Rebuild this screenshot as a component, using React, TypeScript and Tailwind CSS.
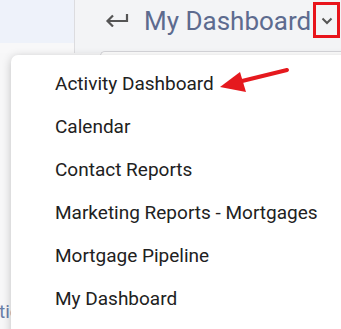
import React from "react";

const items = [
  "Activity Dashboard",
  "Calendar",
  "Contact Reports",
  "Marketing Reports - Mortgages",
  "Mortgage Pipeline",
  "My Dashboard",
];

export default function App() {
  return (
    <div
      className="relative w-[341px] h-[329px] overflow-hidden bg-[#f7f7f8]"
      style={{ fontFamily: "Roboto, 'Liberation Sans', sans-serif" }}
    >
      {/* top bar */}
      <div className="flex h-[53px]">
        <div className="w-[74px] flex flex-col">
          <div className="h-[43px] bg-[#eef2fa]" />
          <div className="flex-1 bg-[#f8f8f9]" />
        </div>
        <div className="w-px bg-[#dcdcdf]" />
        <div className="flex-1 bg-[#f3f4f6] relative">
          <div className="flex items-center h-[42px] pl-[30px]">
            <svg width="24" height="14" viewBox="0 0 24 14" className="mr-[15px] mt-[-2px]">
              <path d="M22 1 V8 H3" fill="none" stroke="#555" strokeWidth="2.2" />
              <path d="M8 2.5 L2.5 8 L8 13.5" fill="none" stroke="#555" strokeWidth="2.2" />
            </svg>
            <span className="text-[26px] leading-none text-[#5d6b8f]">My Dashboard</span>
          </div>
          <div className="absolute left-[238px] top-[2px] w-[27px] h-[36px] border-[3px] border-[#e8141b] flex items-center justify-center pt-[2px]">
            <svg width="12" height="8" viewBox="0 0 12 8">
              <path d="M1.5 1.5 L6 6 L10.5 1.5" fill="none" stroke="#555" strokeWidth="2" />
            </svg>
          </div>
          <div className="absolute left-[25px] top-[51px] right-0 h-[6px] border-t border-l border-[#d6d6da] rounded-tl-[5px] bg-white" />
        </div>
      </div>

      {/* faded text at left bottom */}
      <div className="absolute left-[-1px] top-[298px] text-[19px] text-[#6b7fa8]">tic</div>

      {/* menu */}
      <div className="absolute left-[11px] top-[55px] w-[340px] h-[290px] bg-white rounded-[7px] shadow-[0_2px_10px_rgba(0,0,0,0.22)] pt-[8px]">
        {items.map((t) => (
          <div key={t} className="h-[43px] flex items-center pl-[44px] text-[19px] text-[#212121]">
            {t}
          </div>
        ))}
      </div>

      {/* red annotation arrow */}
      <svg className="absolute left-0 top-0" width="341" height="329" viewBox="0 0 341 329">
        <line x1="287" y1="70" x2="238" y2="82" stroke="#e5191e" strokeWidth="4" strokeLinecap="round" />
        <polygon points="220,87 240,72 246,92" fill="#e5191e" />
      </svg>
    </div>
  );
}
